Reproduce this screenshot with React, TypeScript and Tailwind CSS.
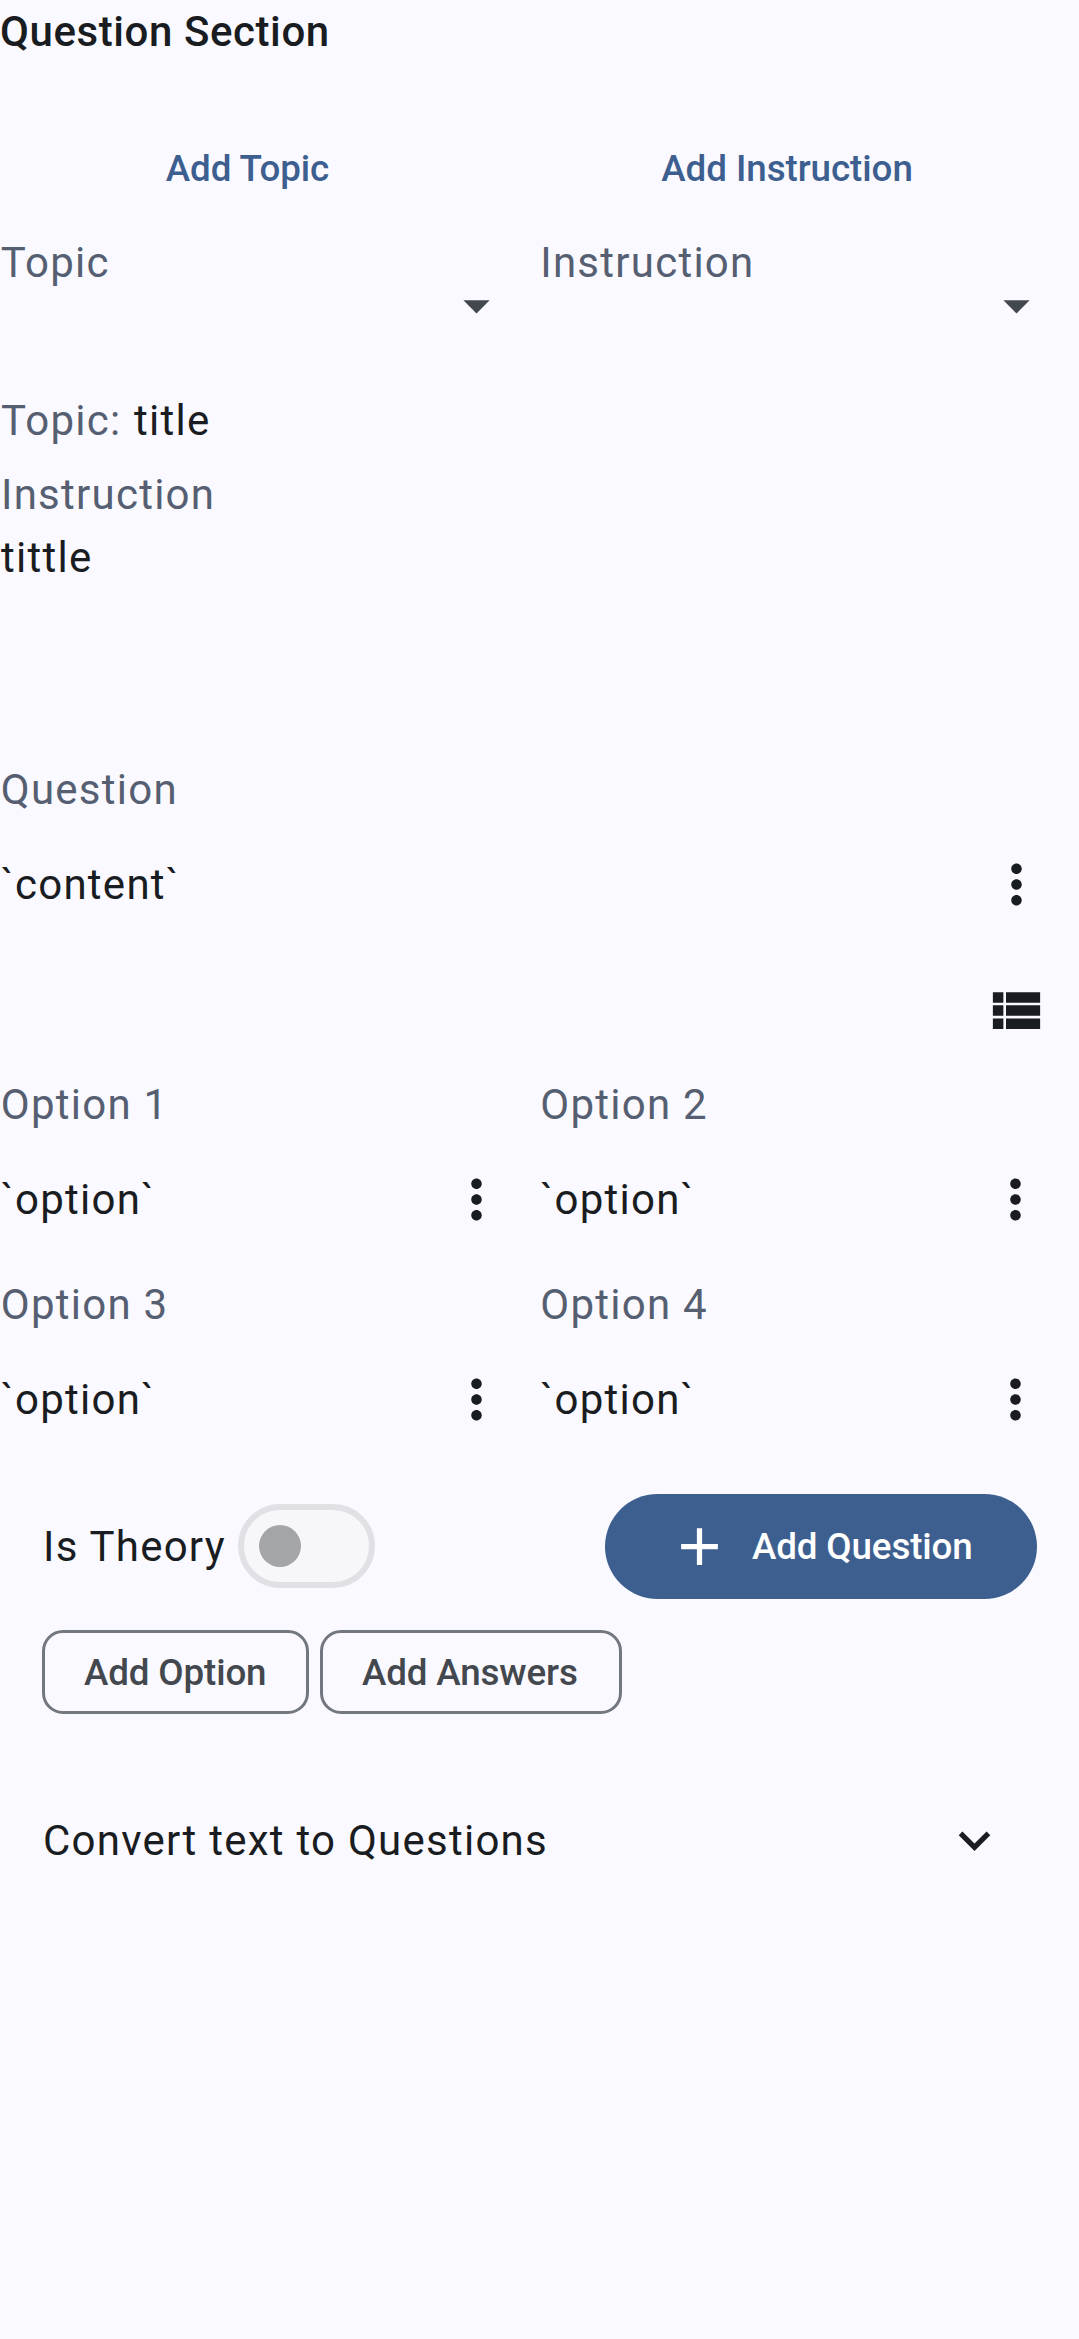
import type { ReactNode } from "react";

const label = "text-[#565f71]";

function Icon({ d, className = "" }: { d: string; className?: string }) {
  return (
    <svg viewBox="0 0 24 24" fill="currentColor" className={`size-[63px] shrink-0 ${className}`}>
      <path d={d} />
    </svg>
  );
}

const MORE =
  "M12 8c1.1 0 2-.9 2-2s-.9-2-2-2-2 .9-2 2 .9 2 2 2zm0 2c-1.1 0-2 .9-2 2s.9 2 2 2 2-.9 2-2-.9-2-2-2zm0 6c-1.1 0-2 .9-2 2s.9 2 2 2 2-.9 2-2-.9-2-2-2z";
const VIEW_LIST =
  "M3 14h4v-4H3v4zm0 5h4v-4H3v4zM3 9h4V5H3v4zm5 5h13v-4H8v4zm0 5h13v-4H8v4zM8 5v4h13V5H8z";
const DROP_DOWN = "M7 10l5 5 5-5z";
const CHEVRON = "M7.41 8.59 12 13.17l4.59-4.58L18 10l-6 6-6-6z";
const PLUS = "M19 13h-6v6h-2v-6H5v-2h6V5h2v6h6z";

function Select({ name }: { name: string }) {
  return (
    <div className="flex h-[106px] justify-between pr-[31.25px] pl-[0.75px]">
      <span className={label}>{name}</span>
      <Icon d={DROP_DOWN} className="mt-[43px] text-[#43474e]" />
    </div>
  );
}

function Field({ name, value, className = "pr-8" }: { name: string; value: string; className?: string }) {
  return (
    <div className={`h-[200px] pl-[0.75px] ${className}`}>
      <p className={label}>{name}</p>
      <div className="mt-8 flex items-center justify-between">
        <span>{value}</span>
        <Icon d={MORE} />
      </div>
    </div>
  );
}

function Chip({ className, children }: { className: string; children: ReactNode }) {
  return (
    <button
      className={`flex h-[84px] items-center justify-start rounded-[21px] border-3 border-[#73777f] pl-[39px] text-[36.75px] font-medium tracking-[-0.14px] whitespace-nowrap text-[#43474e] ${className}`}
    >
      {children}
    </button>
  );
}

export default function App() {
  return (
    <main className="h-[2339px] w-[1079px] overflow-hidden bg-[#faf9ff] font-['Roboto',sans-serif] text-[42px] leading-[63px] tracking-[1.25px] text-[#191c20]">
      <h1 className="font-medium tracking-[0.58px]">Question Section</h1>

      <div className="mt-[52px] grid h-[106px] grid-cols-[540px_539px] text-[36.75px] font-medium tracking-[-0.06px] text-[#3d5f90]">
        <button className="pr-[45px]">Add Topic</button>
        <button className="pr-[45px]">Add Instruction</button>
      </div>

      <div className="mt-2.5 grid grid-cols-2">
        <Select name="Topic" />
        <Select name="Instruction" />
      </div>

      <div className="mt-[52px] pl-px">
        <p>
          <span className={label}>Topic: </span>
          <span className="ml-px">title</span>
        </p>
        <p className={`mt-[11px] ${label}`}>Instruction</p>
        <p>tittle</p>
      </div>

      <div className="mt-[169px]">
        <Field name="Question" value="`content`" className="pr-[31px]" />
      </div>
      <div className="mt-[21px] flex justify-end pr-[31px]">
        <Icon d={VIEW_LIST} />
      </div>

      <div className="mt-[31px] grid grid-cols-2">
        <Field name="Option 1" value="`option`" />
        <Field name="Option 2" value="`option`" />
        <Field name="Option 3" value="`option`" />
        <Field name="Option 4" value="`option`" />
      </div>

      <div className="mt-[21px] flex h-[105px] items-center justify-between pr-[42px] pl-[43px]">
        <div className="flex items-center">
          <span className="w-[195px] whitespace-nowrap">Is Theory</span>
          <span className="mb-px flex h-[84px] w-[137px] items-center rounded-full border-[6px] border-[#e0e0e5] bg-[#f6f6fb] pl-[15px]">
            <span className="size-[42px] rounded-full bg-[#a4a5a9]" />
          </span>
        </div>
        <button className="flex h-[105px] w-[432px] items-center rounded-full bg-[#3d5f90] pl-[63px] text-[36.75px] font-medium tracking-[-0.14px] text-white">
          <Icon d={PLUS} />
          <span className="ml-[21px]">Add Question</span>
        </button>
      </div>

      <div className="mt-[31px] flex gap-[11px] pl-[42px]">
        <Chip className="w-[267px]">Add Option</Chip>
        <Chip className="w-[302px]">Add Answers</Chip>
      </div>

      <div className="mt-[95px] flex items-center justify-between pr-[73px] pl-[43px]">
        <span>Convert text to Questions</span>
        <Icon d={CHEVRON} />
      </div>
    </main>
  );
}
